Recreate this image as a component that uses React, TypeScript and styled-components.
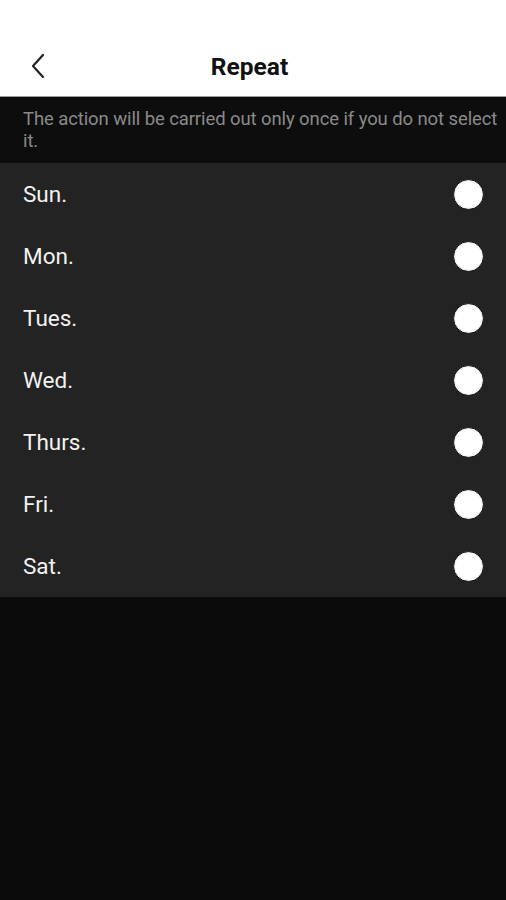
import React from "react";
import styled, { createGlobalStyle } from "styled-components";

const Global = createGlobalStyle`
  html, body { margin: 0; padding: 0; background: #0b0b0b; }
  body { font-family: Roboto, "Noto Sans", "Liberation Sans", sans-serif; }
  * { box-sizing: border-box; }
`;

const Page = styled.div`
  width: 506px;
  min-height: 900px;
  background: #0b0b0b;
  display: flex;
  flex-direction: column;
`;

const Header = styled.header`
  height: 97px;
  background: #ffffff;
  border-bottom: 1px solid #9a9a9a;
  display: grid;
  grid-template-columns: 70px 1fr 70px;
  align-items: center;
  padding-top: 36px;
`;

const BackButton = styled.button`
  border: none;
  background: transparent;
  padding: 0 0 0 30px;
  height: 40px;
  display: flex;
  align-items: center;
  cursor: pointer;
`;

const Title = styled.h1`
  margin: 0;
  text-align: center;
  font-size: 24.5px;
  font-weight: 700;
  color: #111;
  transform: translateX(-3.5px);
`;

const Notice = styled.p`
  margin: 0;
  background: #0d0d0d;
  color: #8a8a8a;
  font-size: 18.5px;
  line-height: 22px;
  padding: 11px 4px 11px 23px;
  letter-spacing: -0.1px;
`;

const List = styled.ul`
  list-style: none;
  margin: 0;
  padding: 0;
  background: #232323;
`;

const Row = styled.li`
  height: 62px;
  display: flex;
  align-items: center;
  justify-content: space-between;
  padding: 0 22px 0 23px;
`;

const Label = styled.span`
  color: #f2f2f2;
  font-size: 22.5px;
`;

const Radio = styled.span<{ $checked?: boolean }>`
  width: 31px;
  height: 31px;
  border-radius: 50%;
  background: #ffffff;
  border: 1px solid #111;
  box-shadow: inset 0 0 2px rgba(0, 0, 0, 0.3);
`;

const days = ["Sun.", "Mon.", "Tues.", "Wed.", "Thurs.", "Fri.", "Sat."];

export default function App() {
  return (
    <Page>
      <Global />
      <Header>
        <BackButton aria-label="Back">
          <svg width="16" height="26" viewBox="0 0 16 26" fill="none">
            <path d="M13 2 L3 13 L13 24" stroke="#222" strokeWidth="2.2" strokeLinecap="round" strokeLinejoin="round" />
          </svg>
        </BackButton>
        <Title>Repeat</Title>
        <span />
      </Header>
      <Notice>The action will be carried out only once if you do not select it.</Notice>
      <List>
        {days.map((d) => (
          <Row key={d}>
            <Label>{d}</Label>
            <Radio />
          </Row>
        ))}
      </List>
    </Page>
  );
}
